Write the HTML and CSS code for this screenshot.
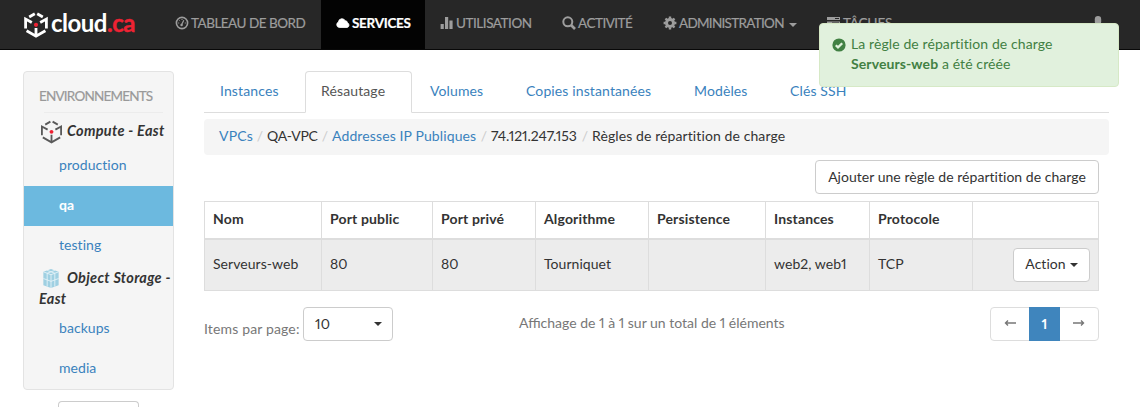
FILE: index.html
```html
<!DOCTYPE html>
<html lang="fr">
<head>
<meta charset="utf-8">
<title>cloud.ca</title>
<link rel="stylesheet" href="styles.css">
</head>
<body>
<svg class="defs" width="0" height="0">
  <symbol id="cube" viewBox="0 0 24 26">
    <g fill="none" stroke="currentColor">
      <path d="M10.8 1.8 5.2 5M13.2 1.8 18.8 5M1.6 16.5V7l6.2 3.4M22.4 16.5V7l-6.2 3.4M2.6 18.8 12 24.2l9.4-5.4M12 16v8"/>
    </g>
    <circle cx="12" cy="12.8" r="2.1" fill="#ee2233"/>
  </symbol>
</svg>
<header class="navbar">
  <a class="brand"><svg class="brand-cube" viewBox="0 0 24 26"><use href="#cube"/></svg><span class="brand-name">cloud<span class="brand-tld">.ca</span></span></a>
  <nav class="nav">
    <a class="nav-item n1"><svg class="ico" viewBox="0 0 14 14"><circle cx="7" cy="7" r="5.6" fill="none" stroke="currentColor" stroke-width="1.6"/><path d="M6.2 9.6 8.8 4.2" stroke="currentColor" stroke-width="1.2"/><circle cx="6.6" cy="9" r="1.2" fill="currentColor"/><path d="M3.2 7h1M4.4 4.4l.7.7M7 3v1M9.8 7h1" stroke="currentColor"/></svg><span>TABLEAU DE BORD</span></a>
    <a class="nav-item n2 active"><svg class="ico" viewBox="0 0 14 14"><path d="M3.2 11.5A2.9 2.9 0 0 1 2.4 6a3.6 3.6 0 0 1 6.8-1.3 2.3 2.3 0 0 1 2.3 2.1 2.5 2.5 0 0 1-.3 4.7z" fill="currentColor" stroke="currentColor" stroke-width=".8"/></svg><span>SERVICES</span></a>
    <a class="nav-item n3"><svg class="ico" viewBox="0 0 14 14"><path d="M.6 8h3.2v5H.6zM5 1h3.2v12H5zM9.4 4.500h3.200V13H9.400z" fill="currentColor"/></svg><span>UTILISATION</span></a>
    <a class="nav-item n4"><svg class="ico" viewBox="0 0 14 14"><circle cx="5.8" cy="5.8" r="4.5" fill="none" stroke="currentColor" stroke-width="2"/><path d="m9 9 4 4" stroke="currentColor" stroke-width="2.6"/></svg><span>ACTIVITÉ</span></a>
    <a class="nav-item n5"><svg class="ico" viewBox="0 0 14 14"><circle cx="7" cy="7" r="3.5" fill="none" stroke="currentColor" stroke-width="3"/><path d="M7 .6v2M7 11.400v2M.6 7h2M11.400 7h2M2.500 2.500l1.400 1.400M10.100 10.100l1.400 1.400M2.500 11.500l1.400-1.400M10.100 3.900l1.400-1.400" stroke="currentColor" stroke-width="2.400"/></svg><span>ADMINISTRATION</span><i class="caret"></i></a>
    <a class="nav-item n6"><svg class="ico" viewBox="0 0 14 14"><path d="M0 1h13v3H0zM0 5.500h13v3H0zM0 10h13v3H0z" fill="currentColor"/><path d="M8 2.500h4M5 7h7" stroke="#272727"/></svg><span>TÂCHES</span></a>
  </nav>
  <svg class="user" viewBox="0 0 14 14"><rect x="3.8" y="0" width="6.4" height="8.6" rx="3.2" fill="currentColor"/><path d="M0 14c0-4 2-5 4-5h6c2 0 4 1 4 5z" fill="currentColor"/></svg>
</header>
<div class="alert" role="alert">
  <svg class="ico" viewBox="0 0 14 14"><circle cx="7" cy="7" r="6.6" fill="currentColor"/><path d="m3.800 7.200 2.200 2.200 4.200-4.200" fill="none" stroke="#e1f1dd" stroke-width="2.300"/></svg>
  <div><span>La règle de répartition de charge</span><br><strong>Serveurs-web</strong> <span>a été créée</span></div>
</div>
<div class="page">
  <div class="side">
    <aside class="well">
      <div class="well-title">ENVIRONNEMENTS</div>
      <div class="rule"></div>
      <div class="group"><svg class="group-cube" viewBox="0 0 24 26"><use href="#cube"/></svg><span>Compute - East</span></div>
      <a class="env">production</a>
      <a class="env active">qa</a>
      <a class="env">testing</a>
      <div class="group storage"><svg class="group-box" viewBox="0 0 18 22"><path d="M9 1 17 4v14l-8 3-8-3V4z" fill="#9fd0e2"/><path d="m1 4 8 3 8-3M9 7v14M1 11l8 3 8-3M5 2.500l8 3v14M13 2.500l-8 3v14" fill="none" stroke="#e6f3f8" stroke-width=".9"/></svg><span>Object Storage - East</span></div>
      <a class="env">backups</a>
      <a class="env">media</a>
    </aside>
    <button class="btn side-btn"></button>
  </div>
  <main class="main">
    <div class="tabs">
      <a class="tab t1">Instances</a><a class="tab t2 active">Résautage</a><a class="tab t3">Volumes</a><a class="tab t4">Copies instantanées</a><a class="tab t5">Modèles</a><a class="tab t6">Clés SSH</a>
    </div>
    <div class="crumbs">
      <a class="c1">VPCs</a><i>/</i><span class="c2">QA-VPC</span><i>/</i><a class="c3">Addresses IP Publiques</a><i>/</i><span class="c4">74.121.247.153</span><i>/</i><span class="c5">Règles de répartition de charge</span>
    </div>
    <div class="content">
      <div class="toolbar"><button class="btn add">Ajouter une règle de répartition de charge</button></div>
      <table class="grid">
        <colgroup><col class="w1"><col class="w2"><col class="w3"><col class="w4"><col class="w5"><col class="w6"><col class="w7"><col class="w8"></colgroup>
        <thead><tr><th>Nom</th><th>Port public</th><th>Port privé</th><th>Algorithme</th><th>Persistence</th><th>Instances</th><th>Protocole</th><th></th></tr></thead>
        <tbody><tr><td>Serveurs-web</td><td>80</td><td>80</td><td>Tourniquet</td><td></td><td>web2, web1</td><td>TCP</td><td class="right"><button class="btn action">Action<i class="caret"></i></button></td></tr></tbody>
      </table>
      <div class="footer">
        <span class="per">Items par page:</span>
        <button class="btn select"><span>10</span><i class="caret"></i></button>
        <span class="info">Affichage de 1 à 1 sur un total de 1 éléments</span>
        <div class="pager">
          <a><svg viewBox="0 0 12 8"><path d="M12 4H1.500M4 1.500 1.500 4 4 6.500" fill="none" stroke="currentColor" stroke-width="1.400"/></svg></a><a class="on">1</a><a><svg viewBox="0 0 12 8"><path d="M0 4h10.500M8 1.500 10.500 4 8 6.500" fill="none" stroke="currentColor" stroke-width="1.400"/></svg></a>
        </div>
      </div>
    </div>
  </main>
</div>
</body>
</html>
```
FILE: styles.css
```css
* { box-sizing: border-box; }
body { margin: 0; height: 407px; overflow: hidden; background: #fff; color: #333; font: 14px/20px Lato, sans-serif; font-feature-settings: "pnum"; letter-spacing: .15px; }
.defs { position: absolute; }
i { font-style: normal; }
.navbar { height: 50px; display: flex; background: #272727; border-bottom: 1px solid #080808; color: #9d9d9d; }
.brand { width: 160px; padding-left: 24px; display: flex; align-items: center; gap: 3px; color: #fff; }
.brand-cube { width: 24px; height: 26px; stroke-width: 2.8; }
.brand-name { font: 700 24px/24px Lato, sans-serif; letter-spacing: -.5px; padding-bottom: 3px; }
.brand-tld { color: #ee2233; -webkit-text-stroke: .4px; }
.nav { display: flex; }
.nav-item { display: flex; align-items: center; padding: 0 0 3px 15px; white-space: nowrap; font-size: 13.5px; -webkit-text-stroke: .2px; }
.nav-item .ico { width: 14px; height: 14px; margin-right: 2px; flex: none; }
.nav-item.active { background: #030303; color: #fff; font-weight: 700; }
.n1 { width: 161px; letter-spacing: -.5px; }
.n2 { width: 104px; letter-spacing: -.3px; }
.n3 { width: 122px; letter-spacing: -.45px; }
.n4 { width: 101px; letter-spacing: -.5px; }
.n5 { width: 164px; letter-spacing: -.7px; }
.n6 { letter-spacing: -.2px; }
.user { width: 14px; height: 14px; margin: 16px 35px 0 auto; }
.caret { display: inline-block; border: 4px solid transparent; border-top-color: currentColor; border-bottom: 0; }
.n5 .caret { margin: 3px 0 0 5px; }
.alert { position: absolute; left: 819px; top: 23px; width: 300px; height: 64px; padding: 10px 12px; display: flex; gap: 5px; background: #e1f1dd; border: 1px solid #d6e9c6; border-radius: 4px; color: #418043; letter-spacing: .1px; }
.alert .ico { width: 14px; height: 14px; margin-top: 4px; }
.page { display: flex; padding: 21px 0 0 23px; }
.side { width: 151px; margin-right: 30px; }
.well { height: 319px; background: #f5f5f5; border: 1px solid #e3e3e3; border-radius: 4px; padding-top: 14px; }
.well-title { padding-left: 15px; color: #999; font-size: 13.5px; letter-spacing: -.8px; -webkit-text-stroke: .2px; }
.rule { height: 1px; margin: 6px 10px 8px 20px; background: #ececec; }
.group { height: 25px; padding-left: 15px; font-size: 14.5px; font-weight: 700; font-style: italic; line-height: 21px; letter-spacing: .3px; white-space: nowrap; }
.group span { position: relative; top: -1px; }
.group-cube { width: 23px; height: 24px; margin: -1px 4px 0 1px; float: left; color: #5a5a5a; stroke-width: 2; }
.storage { height: 43px; padding-top: 2px; white-space: normal; }
.group-box { width: 18px; height: 21px; margin: 0 7px 0 3px; float: left; }
.env { display: block; height: 40px; padding: 9px 0 0 35px; color: #3a82bd; letter-spacing: .05px; }
.env.active { background: #6cb9df; color: #fff; font-weight: 700; }
.btn { font: inherit; font-feature-settings: inherit; letter-spacing: inherit; color: #333; background: #fff; border: 1px solid #ccc; border-radius: 4px; height: 34px; }
.side-btn { display: block; width: 81px; height: 6px; margin: 11px 0 0 35px; border-bottom: 0; border-radius: 4px 4px 0 0; }
.main { width: 905px; }
.tabs { display: flex; height: 42px; border-bottom: 1px solid #ddd; }
.tab { height: 42px; padding: 10px 0 0 16px; color: #3a82bd; white-space: nowrap; letter-spacing: .12px; }
.tab.active { color: #555; background: #fff; border: 1px solid #ddd; border-bottom-color: #fff; border-radius: 4px 4px 0 0; padding: 9px 0 0 15px; }
.t1 { width: 101px; } .t2 { width: 107px; margin-right: 2px; } .t3 { width: 96px; } .t4 { width: 168px; } .t5 { width: 96px; }
.crumbs { height: 36px; margin-top: 6px; padding: 7px 15px; display: flex; background: #f5f5f5; border-radius: 4px; white-space: nowrap; }
.crumbs a { color: #3a82bd; }
.crumbs i { width: 14px; text-align: center; color: #ccc; flex: none; }
.c1 { width: 34px; }
.c2 { width: 51px; letter-spacing: -.3px; }
.c3 { width: 145px; letter-spacing: .12px; }
.c4 { width: 87px; letter-spacing: -.05px; }
.c5 { letter-spacing: .1px; }
.content { width: 895px; }
.toolbar { display: flex; justify-content: flex-end; padding-top: 5px; }
.add { width: 284px; padding: 0 0 1px; letter-spacing: .03px; }
.grid { margin-top: 7px; width: 895px; table-layout: fixed; border-collapse: collapse; }
.w1 { width: 117px; } .w2 { width: 111px; } .w3 { width: 103px; } .w4 { width: 113px; } .w5 { width: 117px; } .w6 { width: 104px; } .w7 { width: 103px; }
.grid th, .grid td { border: 1px solid #ddd; padding: 0 8px 1px; text-align: left; white-space: nowrap; }
.grid th { height: 37px; border-bottom-width: 2px; }
.grid td { height: 52px; background: #ececec; letter-spacing: .05px; }
.grid .right { text-align: right; padding-bottom: 0; }
.action { width: 77px; padding: 0 0 1px; }
.action .caret { margin: 0 0 2px 4px; }
.footer { display: flex; margin-top: 16px; color: #777; white-space: nowrap; }
.per { width: 99px; padding-top: 12px; }
.select { width: 90px; padding: 0 10px 0 11px; display: flex; justify-content: space-between; align-items: center; }
.info { width: 471px; margin-left: 126px; padding-top: 6px; letter-spacing: 0; }
.pager { display: flex; width: 109px; height: 34px; border: 1px solid #ddd; border-radius: 4px; flex: none; }
.pager a { width: 38px; display: grid; place-items: center; }
.pager svg { width: 12px; height: 8px; margin-top: -2px; }
.pager .on { width: 31px; height: 34px; margin: -1px 0; background: #3f85bd; color: #fff; font-weight: 700; }
```
